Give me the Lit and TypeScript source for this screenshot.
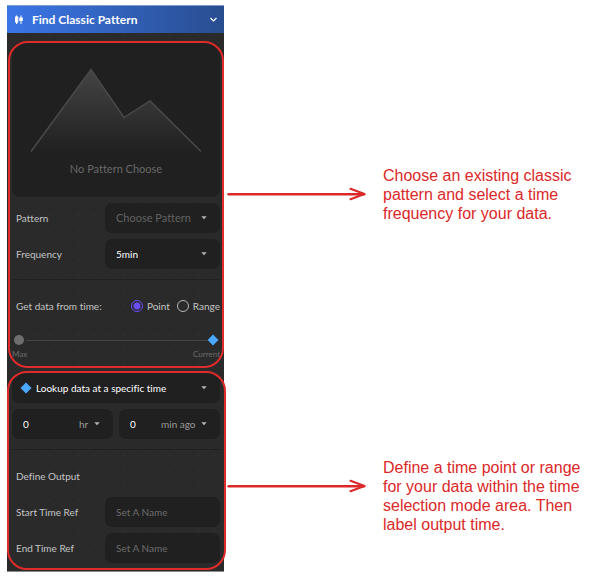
import { LitElement, html, css, svg } from "lit";
import { customElement, property } from "lit/decorators.js";

const caret = html`<svg class="caret" viewBox="0 0 6 4" width="6" height="4" aria-hidden="true">
  <path d="M.3 .3H5.700L3 3.300Z" fill="currentColor" />
</svg>`;

@customElement("side-note")
class SideNote extends LitElement {
  @property() text = "";

  static styles = css`
    :host {
      display: flex;
      align-items: flex-start;
      gap: 17px;
      color: #db2828;
      font: 16px/19px "Liberation Sans", Arial, sans-serif;
    }
    svg {
      flex: none;
      margin-top: 21px;
    }
    p {
      margin: 0;
      flex: 1;
      max-width: 208px;
    }
  `;

  render() {
    return html`
      <svg width="140" height="14" viewBox="0 0 140 14" fill="none" stroke="currentColor" stroke-linecap="round" stroke-linejoin="round" aria-hidden="true">
        <path d="M2.500 7.200H138" stroke-width="2.400" />
        <path d="M124.500 1.800L138.500 7L124.500 12.200" stroke-width="2.200" />
      </svg>
      <p>${this.text}</p>
    `;
  }
}

@customElement("app-root")
class AppRoot extends LitElement {
  static styles = css`
    :host {
      display: block;
      background: #fff;
      font: 10px/14px Lato, "Open Sans", sans-serif;
      font-variant-ligatures: none;
      color: #c4c4c4;
    }
    * {
      box-sizing: border-box;
    }
    main {
      display: flex;
      align-items: flex-start;
      gap: 2px;
      padding: 5px 7px;
    }
    .panel {
      flex: none;
      width: 217px;
      background: radial-gradient(circle, #303030 1px, transparent 1px) 5px 8px / 15px 15px, #2a2a2a;
      border-bottom: 1px solid #8a8a8a;
    }
    .header {
      display: flex;
      align-items: center;
      width: 100%;
      height: 28px;
      padding: 0 7px;
      border: 0;
      border-top: 1px solid #7f9cc9;
      background: linear-gradient(90deg, #3b76e8, #294d8f);
      color: #fff;
      font: bold 12px/16px Lato, sans-serif;
      font-variant-ligatures: none;
      text-align: left;
    }
    .header span {
      flex: 1;
      margin-left: 8px;
    }
    .group {
      position: relative;
      display: flex;
      flex-direction: column;
      gap: 6px;
      padding: 0 4px 0 5px;
    }
    .group::after {
      content: "";
      position: absolute;
      border: 2px solid #e02b2b;
      border-radius: 20px;
      pointer-events: none;
    }
    .source {
      padding-top: 10px;
    }
    .source::after {
      inset: 8px 0 -7px 1px;
    }
    .output {
      padding-top: 12px;
      padding-bottom: 8px;
    }
    .output::after {
      inset: 10px -2px 1px 0;
    }
    .preview {
      display: flex;
      flex-direction: column;
      align-items: center;
      gap: 7px;
      height: 154px;
      margin: 0;
      padding-top: 24px;
      border-radius: 8px;
      background: #202020;
      color: #686868;
      font-size: 11px;
      line-height: 18px;
    }
    .row {
      display: flex;
      align-items: center;
      justify-content: space-between;
      padding-left: 4px;
    }
    .control {
      position: relative;
      display: flex;
      align-items: center;
      height: 30px;
      padding: 0 13px 0 11px;
      border-radius: 7px;
      background: #202020;
    }
    .row .control {
      width: 115px;
    }
    .control select,
    .control input {
      appearance: none;
      flex: 1;
      min-width: 0;
      width: 100%;
      margin: 0;
      padding: 0;
      border: 0;
      outline: 0;
      background: none;
      color: #fff;
      font: 10px/16px Lato, sans-serif;
      font-variant-ligatures: none;
    }
    .control select.empty {
      color: #626262;
      font-size: 11px;
    }
    .control input::placeholder {
      color: #6c6c6c;
      opacity: 1;
    }
    .caret {
      flex: none;
      color: #b4b4b4;
    }
    hr {
      width: 100%;
      height: 1px;
      margin: 4px 0 5px;
      border: 0;
      background: #202020;
    }
    fieldset {
      display: flex;
      align-items: center;
      height: 28px;
      margin: 8px 0 1px;
      padding: 0 0 0 4px;
      border: 0;
    }
    .caption {
      flex: 1;
    }
    .choice {
      display: flex;
      align-items: center;
      gap: 4px;
      margin-left: 7px;
    }
    .choice input {
      appearance: none;
      width: 12px;
      height: 12px;
      margin: 0;
      border: 1px solid #b8b8b8;
      border-radius: 50%;
    }
    .choice input:checked {
      border-color: #6c4cff;
      background: radial-gradient(circle, #6c4cff 3px, transparent 4px);
    }
    .track {
      display: flex;
      align-items: center;
      padding: 0 1px 0 2px;
      height: 12px;
    }
    .start {
      width: 10px;
      height: 10px;
      border-radius: 50%;
      background: #6e6e6e;
    }
    .track input {
      appearance: none;
      flex: 1;
      min-width: 0;
      height: 12px;
      margin: 0 0 0 2px;
      background: linear-gradient(#444, #444) center / 100% 1px no-repeat;
    }
    .track input::-webkit-slider-thumb {
      appearance: none;
      width: 12px;
      height: 12px;
      background: #4aa8ff;
      clip-path: polygon(50% 5%, 95% 50%, 50% 95%, 5% 50%);
    }
    .ends {
      display: flex;
      justify-content: space-between;
      margin-top: 1px;
      color: #6a6a6a;
      font-size: 8px;
      line-height: 14px;
    }
    .mode {
      gap: 4px;
      padding-left: 8px;
    }
    .times {
      display: grid;
      grid-template-columns: 1fr 1fr;
      gap: 6px;
    }
    .times .control {
      gap: 5px;
    }
    .times .control select {
      flex: none;
      width: auto;
      color: #9a9a9a;
    }
    .heading {
      margin: 0;
      padding-left: 4px;
      font: 10px/30px Lato, sans-serif;
      font-variant-ligatures: none;
    }
    .notes {
      flex: 1;
      display: flex;
      flex-direction: column;
      gap: 235px;
      padding-top: 161px;
    }
  `;

  private nameField(id: string, label: string) {
    return html`<div class="row">
      <label for=${id}>${label}</label>
      <div class="control"><input id=${id} placeholder="Set A Name" /></div>
    </div>`;
  }

  private timeField(name: string, unit: string) {
    return html`<div class="control">
      <input aria-label=${name} value="0" />
      <select aria-label="${name} unit"><option>${unit}</option></select>
      ${caret}
    </div>`;
  }

  private mountains() {
    return svg`<svg width="172" height="86" viewBox="0 0 172 86" aria-hidden="true">
      <defs>
        <linearGradient id="fade" x1="0" y1="0" x2="0" y2="1">
          <stop offset="0" stop-color="#444" />
          <stop offset="1" stop-color="#202020" />
        </linearGradient>
      </defs>
      <path d="M1 84.500L61 2.500L94 50.500L120 34L171 84.500Z" fill="url(#fade)" />
      <path d="M1 84.500L61 2.500L94 50.500L120 34L171 84.500" fill="none" stroke="#4a4a4a" stroke-width="1.400" />
    </svg>`;
  }

  render() {
    return html`
      <main>
        <section class="panel">
          <button class="header" aria-expanded="true">
            <svg width="10" height="10" viewBox="0 0 10 10" fill="#fff" aria-hidden="true">
              <path d="M2 .5H3.200V1.500H4.300V7.500H3.200V9H2V7.500H1V1.500H2ZM6.500 .5H7.500V2.500H8.800V6H7.500V9H6.500V6H5.300V2.500H6.500Z" />
            </svg>
            <span>Find Classic Pattern</span>
            <svg width="7" height="5" viewBox="0 0 7 5" fill="none" stroke="#fff" stroke-width="1.200" aria-hidden="true">
              <path d="M.5 1L3.500 4L6.500 1" />
            </svg>
          </button>

          <div class="group source">
            <figure class="preview">
              ${this.mountains()}
              <figcaption>No Pattern Choose</figcaption>
            </figure>
            <div class="row">
              <label for="pattern">Pattern</label>
              <div class="control">
                <select id="pattern" class="empty"><option>Choose Pattern</option></select>${caret}
              </div>
            </div>
            <div class="row">
              <label for="frequency">Frequency</label>
              <div class="control">
                <select id="frequency"><option>5min</option></select>${caret}
              </div>
            </div>
            <hr />
            <fieldset aria-label="Get data from time">
              <span class="caption">Get data from time:</span>
              <label class="choice"><input type="radio" name="kind" checked />Point</label>
              <label class="choice"><input type="radio" name="kind" />Range</label>
            </fieldset>
            <div class="timeline">
              <div class="track">
                <span class="start"></span>
                <input type="range" min="0" max="100" value="100" aria-label="Time" />
              </div>
              <div class="ends"><span>Max</span><span>Current</span></div>
            </div>
          </div>

          <div class="group output">
            <div class="control mode">
              <svg width="12" height="12" viewBox="0 0 12 12" aria-hidden="true">
                <path d="M6 .5L11.500 6L6 11.500L.5 6Z" fill="#4aa8ff" />
              </svg>
              <select aria-label="Lookup mode"><option>Lookup data at a specific time</option></select>${caret}
            </div>
            <div class="times">
              ${this.timeField("Hours", "hr")} ${this.timeField("Minutes", "min ago")}
            </div>
            <hr />
            <h2 class="heading">Define Output</h2>
            ${this.nameField("start-ref", "Start Time Ref")}
            ${this.nameField("end-ref", "End Time Ref")}
          </div>
        </section>

        <aside class="notes">
          <side-note text="Choose an existing classic pattern and select a time frequency for your data."></side-note>
          <side-note text="Define a time point or range for your data within the time selection mode area. Then label output time."></side-note>
        </aside>
      </main>
    `;
  }
}
